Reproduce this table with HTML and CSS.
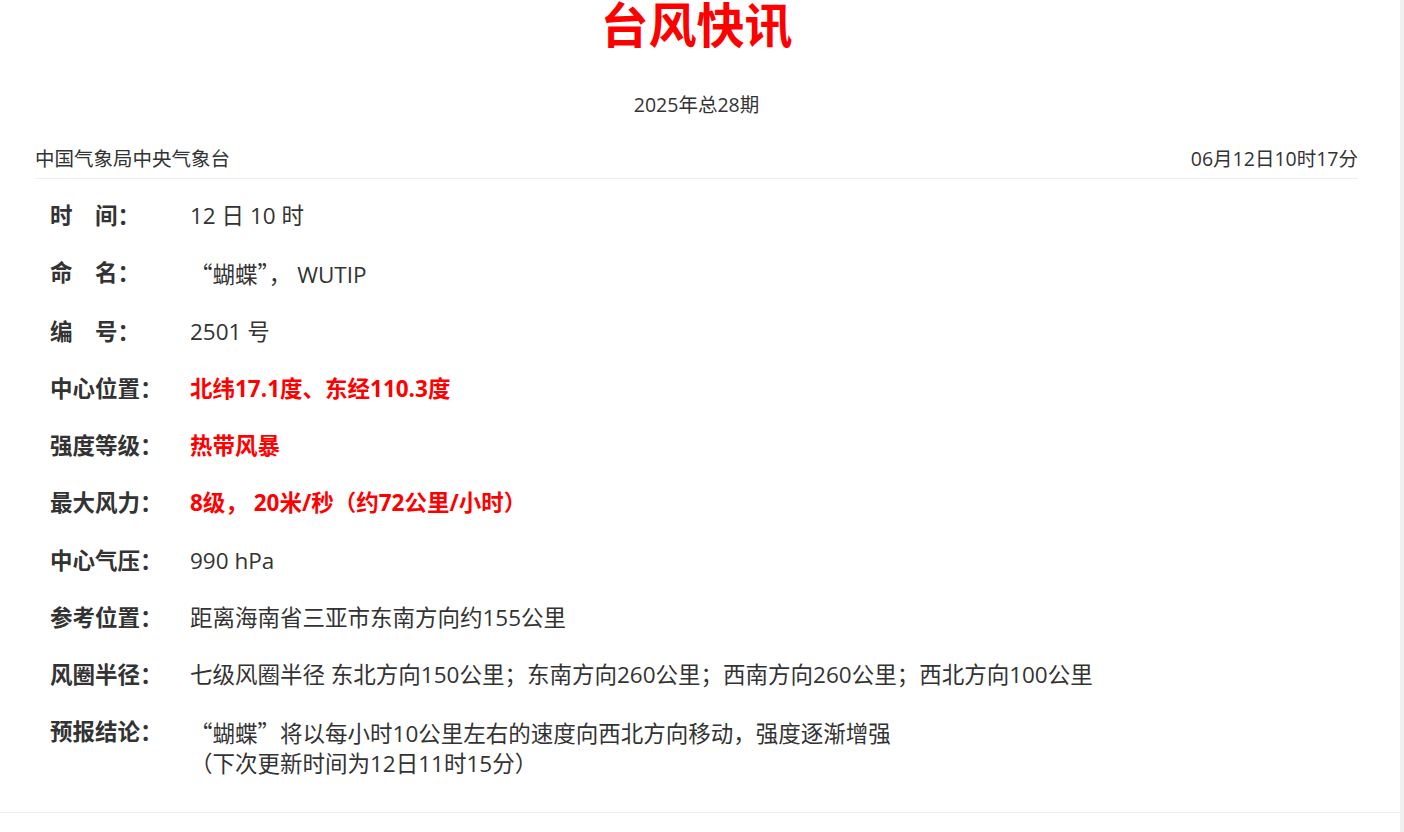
FILE: index.html
```html
<!DOCTYPE html>
<html lang="zh-CN">
<head>
    <meta charset="UTF-8">
    <meta name="viewport" content="width=device-width, initial-scale=1.0">
    <title>台风快讯</title>
    <link rel="stylesheet" href="styles.css">
</head>
<body>
    <div class="page">
        <div class="content">
            <h1 class="title">台风快讯</h1>
            <div class="issue">2025年总28期</div>

            <!-- Source and publish time -->
            <div class="meta">
                <span>中国气象局中央气象台</span>
                <span>06月12日10时17分</span>
            </div>

            <!-- Typhoon details -->
            <div class="list">
                <div class="row">
                    <div class="label">时　间：</div>
                    <div class="value">12 日 10 时</div>
                </div>
                <div class="row">
                    <div class="label">命　名：</div>
                    <div class="value"><span class="cjk">“</span>蝴蝶<span class="cjk">”</span>， WUTIP</div>
                </div>
                <div class="row">
                    <div class="label">编　号：</div>
                    <div class="value">2501 号</div>
                </div>
                <div class="row">
                    <div class="label">中心位置：</div>
                    <div class="value highlight">北纬17.1度、东经110.3度</div>
                </div>
                <div class="row">
                    <div class="label">强度等级：</div>
                    <div class="value highlight">热带风暴</div>
                </div>
                <div class="row">
                    <div class="label">最大风力：</div>
                    <div class="value highlight">8级， 20米/秒（约72公里/小时）</div>
                </div>
                <div class="row">
                    <div class="label">中心气压：</div>
                    <div class="value">990 hPa</div>
                </div>
                <div class="row">
                    <div class="label">参考位置：</div>
                    <div class="value">距离海南省三亚市东南方向约155公里</div>
                </div>
                <div class="row">
                    <div class="label">风圈半径：</div>
                    <div class="value">七级风圈半径 东北方向150公里；东南方向260公里；西南方向260公里；西北方向100公里</div>
                </div>
                <div class="row">
                    <div class="label">预报结论：</div>
                    <div class="value"><span class="cjk">“</span>蝴蝶<span class="cjk">”</span>将以每小时10公里左右的速度向西北方向移动，强度逐渐增强<br>（下次更新时间为12日11时15分）</div>
                </div>
            </div>
        </div>
    </div>
</body>
</html>
```

FILE: styles.css
```css
html, body {
    margin: 0;
    padding: 0;
}

body {
    background-color: #f0f0f0;
    color: #333;
    font-family: "Open Sans", "Noto Sans CJK SC", sans-serif;
    overflow: hidden;
}

.page {
    display: flow-root;
    width: 1400px;
    height: 832px;
    background: #ffffff;
}

.content {
    padding: 0 42px 33px 35px;
    border-bottom: 1px solid #eeeeee;
}

.cjk {
    font-family: "Noto Sans CJK SC", sans-serif;
}

.title {
    margin: -4px 0 0 0;
    font-family: "Noto Sans CJK SC", sans-serif;
    font-size: 48px;
    line-height: 52px;
    font-weight: bold;
    color: #ff0000;
    text-align: center;
}

.issue {
    margin-top: 43px;
    font-size: 19.5px;
    line-height: 27px;
    text-align: center;
}

.meta {
    display: flex;
    justify-content: space-between;
    margin-top: 27px;
    padding-bottom: 6px;
    font-size: 19.5px;
    line-height: 27px;
    border-bottom: 1px solid #eeeeee;
}

.list {
    display: flex;
    flex-direction: column;
    gap: 27.1px;
    padding: 22px 0 0 15px;
}

.row {
    display: flex;
    font-size: 22.5px;
    line-height: 30px;
}

.label {
    width: 140px;
    flex-shrink: 0;
    font-weight: bold;
}

.value {
    flex: 1;
}

.highlight {
    color: #ff0000;
    font-weight: bold;
}
```
